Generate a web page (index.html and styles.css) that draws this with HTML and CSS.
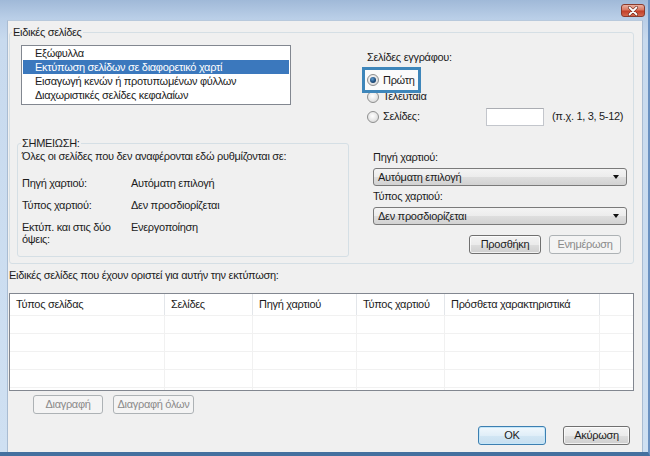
FILE: index.html
```html
<!DOCTYPE html>
<html lang="el">
<head>
<meta charset="utf-8">
<title>Ειδικές σελίδες</title>
<link rel="stylesheet" href="styles.css">
</head>
<body>
<div class="window">
  <div class="titlebar">
    <div class="close">
      <svg width="14" height="10" viewBox="0 0 14 10"><path d="M3.5 1.5 L10.5 8.5 M10.5 1.5 L3.5 8.5" stroke="#5a1d12" stroke-width="3" stroke-linecap="round"/><path d="M3.5 1.5 L10.5 8.5 M10.5 1.5 L3.5 8.5" stroke="#ffffff" stroke-width="1.8" stroke-linecap="round"/></svg>
    </div>
  </div>
  <div class="frame">
    <div class="client">
      <fieldset class="group">
        <legend>Ειδικές σελίδες</legend>
        <div class="top-row">
          <ul class="listbox">
            <li>Εξώφυλλα</li>
            <li class="selected">Εκτύπωση σελίδων σε διαφορετικό χαρτί</li>
            <li>Εισαγωγή κενών ή προτυπωμένων φύλλων</li>
            <li>Διαχωριστικές σελίδες κεφαλαίων</li>
          </ul>
          <div class="docpages">
            <div class="doc-label">Σελίδες εγγράφου:</div>
            <div class="radio-row focus"><span class="radio checked"></span><span>Πρώτη</span></div>
            <div class="radio-row last"><span class="radio"></span><span>Τελευταία</span></div>
            <div class="pages-row"><span class="radio"></span><span class="pages-label">Σελίδες:</span><span class="textbox"></span><span class="hint">(π.χ. 1, 3, 5-12)</span></div>
          </div>
        </div>
        <div class="bottom-row">
          <fieldset class="note">
            <legend>ΣΗΜΕΙΩΣΗ:</legend>
            <div class="note-intro">Όλες οι σελίδες που δεν αναφέρονται εδώ ρυθμίζονται σε:</div>
            <div class="note-grid">
              <div class="k">Πηγή χαρτιού:</div><div class="v">Αυτόματη επιλογή</div>
              <div class="k">Τύπος χαρτιού:</div><div class="v">Δεν προσδιορίζεται</div>
              <div class="k two">Εκτύπ. και στις δύο όψεις:</div><div class="v">Ενεργοποίηση</div>
            </div>
          </fieldset>
          <div class="paper">
            <div class="plabel">Πηγή χαρτιού:</div>
            <div class="combo"><span>Αυτόματη επιλογή</span><span class="arrow"></span></div>
            <div class="plabel">Τύπος χαρτιού:</div>
            <div class="combo"><span>Δεν προσδιορίζεται</span><span class="arrow"></span></div>
            <div class="paper-buttons">
              <div class="btn">Προσθήκη</div>
              <div class="btn disabled">Ενημέρωση</div>
            </div>
          </div>
        </div>
      </fieldset>
      <div class="defined-label">Ειδικές σελίδες που έχουν οριστεί για αυτήν την εκτύπωση:</div>
      <div class="table">
        <div class="th">Τύπος σελίδας</div><div class="th">Σελίδες</div><div class="th">Πηγή χαρτιού</div><div class="th">Τύπος χαρτιού</div><div class="th">Πρόσθετα χαρακτηριστικά</div><div class="th"></div>
        <div class="td"></div><div class="td"></div><div class="td"></div><div class="td"></div><div class="td"></div><div class="td"></div>
        <div class="td"></div><div class="td"></div><div class="td"></div><div class="td"></div><div class="td"></div><div class="td"></div>
        <div class="td"></div><div class="td"></div><div class="td"></div><div class="td"></div><div class="td"></div><div class="td"></div>
        <div class="td"></div><div class="td"></div><div class="td"></div><div class="td"></div><div class="td"></div><div class="td"></div>
        <div class="td"></div><div class="td"></div><div class="td"></div><div class="td"></div><div class="td"></div><div class="td"></div>
      </div>
      <div class="delete-buttons">
        <div class="btn disabled del">Διαγραφή</div>
        <div class="btn disabled delall">Διαγραφή όλων</div>
      </div>
      <div class="dialog-buttons">
        <div class="btn default ok">OK</div>
        <div class="btn cancel">Ακύρωση</div>
      </div>
    </div>
  </div>
</div>
</body>
</html>
```

FILE: styles.css
```css
* { box-sizing: border-box; }
html, body { margin: 0; padding: 0; }
body {
  width: 650px;
  height: 456px;
  overflow: hidden;
  font-family: "Liberation Sans", Arial, sans-serif;
  font-size: 11px;
  letter-spacing: -0.3px;
  line-height: 13px;
  color: #1c1c1c;
  background: #c7d9ed;
}
.window {
  width: 650px;
  height: 456px;
  display: flex;
  flex-direction: column;
  background: linear-gradient(#a0b9d8 0px, #b9cee7 18px, #c8daee 40px, #cfe0f2 100%);
  border-bottom: 4px solid #44709f;
  border-right: 2px solid #6a91c1;
}
.titlebar {
  height: 20px;
  flex: none;
  display: flex;
  justify-content: flex-end;
  align-items: flex-start;
  padding: 4px 3px 0 0;
}
.close {
  width: 24px;
  height: 13px;
  border-radius: 3px;
  border: 1px solid #8a3b2c;
  background: linear-gradient(#eab1a2 0%, #d97760 45%, #c2402a 55%, #d4674e 100%);
  display: flex;
  align-items: center;
  justify-content: center;
}
.close svg { display: block; }
.frame {
  flex: 1;
  display: flex;
  padding: 0 5px 0 7px;
}
.client {
  flex: 1;
  background: #f0f0f0;
  border-left: 1px solid #a9bcd2;
  border-right: 1px solid #a9bcd2;
  border-top: 1px solid #b8c9dc;
  padding: 5px 8px 0 1px;
  display: flex;
  flex-direction: column;
  align-items: stretch;
}

/* Group boxes */
.group {
  margin: 0;
  border: 1px solid #d5dfe5;
  border-radius: 3px;
  padding: 6px 6px 6px 11px;
  min-width: 0;
}
.group > legend {
  padding: 0 1px;
  margin-left: -9px;
  line-height: 13px;
}
.top-row { display: flex; align-items: flex-start; }
.listbox {
  list-style: none;
  margin: 0;
  padding: 0;
  width: 270px;
  height: 60px;
  flex: none;
  background: #fff;
  border: 1px solid #828790;
}
.listbox li {
  height: 14px;
  line-height: 14px;
  padding-left: 12px;
  margin: 0 1px;
  white-space: nowrap;
}
.listbox li.selected { background: #3b78bd; color: #fff; }

.docpages {
  flex: 1;
  margin-left: 76px;
  display: flex;
  flex-direction: column;
  align-items: flex-start;
}
.doc-label { margin-top: 6px; margin-bottom: 7px; }
.radio-row {
  display: flex;
  align-items: center;
  height: 18px;
  gap: 4px;
  white-space: nowrap;
}
.radio-row.focus {
  position: relative;
  z-index: 1;
  height: 26px;
  margin: -4px 0 -7px -5px;
  padding: 1px 3px 1px 2px;
  border: 3px solid #3e86ba;
  background: #fbfbfb;
}
.radio-row.last { height: 21px; }
.pages-row {
  display: grid;
  grid-template-columns: 12px 99px 58px auto;
  column-gap: 4px;
  align-items: center;
  height: 19px;
  white-space: nowrap;
}
.radio {
  position: relative;
  width: 12px;
  height: 12px;
  flex: none;
  border-radius: 50%;
  border: 1px solid #8e8f8f;
  background: radial-gradient(circle at 45% 40%, #ffffff 0%, #e6e6e6 55%, #cfcfcf 100%);
}
.radio.checked::after {
  content: "";
  position: absolute;
  left: 2px;
  top: 2px;
  width: 6px;
  height: 6px;
  border-radius: 50%;
  background: radial-gradient(circle at 40% 35%, #5f9cd0 0%, #1f4f7e 55%, #0f2f50 100%);
}
.textbox {
  height: 18px;
  background: #fff;
  border: 1px solid #c3c6cc;
  border-top-color: #abadb3;
}
.hint { margin-left: 4px; }

.bottom-row {
  display: flex;
  align-items: flex-start;
  margin-top: 11px;
}
.note {
  margin: 0 0 0 -4px;
  width: 332px;
  flex: none;
  border: 1px solid #d5dfe5;
  border-radius: 3px;
  padding: 0 8px 11px 4px;
  min-width: 0;
}
.note > legend {
  padding: 0 1px;
  margin-left: -1px;
  line-height: 13px;
}
.note-intro { white-space: nowrap; }
.note-grid {
  margin-top: 14px;
  display: grid;
  grid-template-columns: 100px 1fr;
  column-gap: 9px;
  row-gap: 9px;
  align-items: start;
}
.note-grid .k.two { line-height: 12px; }
.note-grid .k.two + .v { line-height: 12px; }

.paper {
  margin-left: 24px;
  margin-top: 14px;
  width: 254px;
  flex: none;
  display: flex;
  flex-direction: column;
}
.combo {
  margin-top: 4px;
  height: 18px;
  border: 1px solid #7a7a7a;
  border-radius: 3px;
  background: linear-gradient(#f4f4f4 0%, #ececec 50%, #dedede 51%, #d2d2d2 100%);
  display: flex;
  align-items: center;
  justify-content: space-between;
  padding: 0 7px 0 4px;
}
.plabel { margin-top: 4px; }
.paper > .plabel:first-child { margin-top: 0; }
.arrow {
  width: 0;
  height: 0;
  border-left: 3.5px solid transparent;
  border-right: 3.5px solid transparent;
  border-top: 4px solid #111;
}
.paper-buttons {
  margin-top: 10px;
  display: flex;
  justify-content: flex-end;
  gap: 8px;
  padding-right: 6px;
}

/* Buttons */
.btn {
  height: 19px;
  width: 72px;
  flex: none;
  display: flex;
  align-items: center;
  justify-content: center;
  border: 1px solid #707070;
  border-radius: 3px;
  background: linear-gradient(#f3f3f3 0%, #ebebeb 50%, #dddddd 51%, #cfcfcf 100%);
  box-shadow: inset 0 0 0 1px rgba(255,255,255,0.7);
  white-space: nowrap;
}
.btn.disabled {
  border-color: #adb2b5;
  background: #f4f4f4;
  color: #8a8a8a;
  box-shadow: none;
}
.btn.default {
  border-color: #3c7fb1;
  background: linear-gradient(#f1f8fd 0%, #e0eef8 50%, #d2e6f4 51%, #c7dff0 100%);
  box-shadow: inset 0 0 0 1px #c5e6f8;
}

.defined-label { margin-top: 5px; white-space: nowrap; }

.table {
  margin-top: 11px;
  height: 98px;
  overflow: hidden;
  background: #fff;
  border: 1px solid #828790;
  display: grid;
  grid-template-columns: 155px 88px 104px 88px 155px 1fr;
  grid-auto-rows: 18px;
  grid-template-rows: 21px;
}
.th {
  display: flex;
  align-items: center;
  padding-left: 6px;
  border-right: 1px solid #e3e6ea;
  white-space: nowrap;
}
.td {
  border-right: 1px solid #f1f1f1;
  border-top: 1px solid #f1f1f1;
}
.th:nth-child(6), .td:nth-child(6n) { border-right: none; }

.delete-buttons {
  margin-top: 4px;
  display: flex;
  gap: 10px;
  padding-left: 24px;
}
.btn.del { width: 70px; }
.btn.delall { width: 81px; }

.dialog-buttons {
  margin-top: 12px;
  display: flex;
  justify-content: flex-end;
  gap: 17px;
  padding-right: 4px;
}
.btn.ok { width: 68px; }
.btn.cancel { width: 67px; }
```
